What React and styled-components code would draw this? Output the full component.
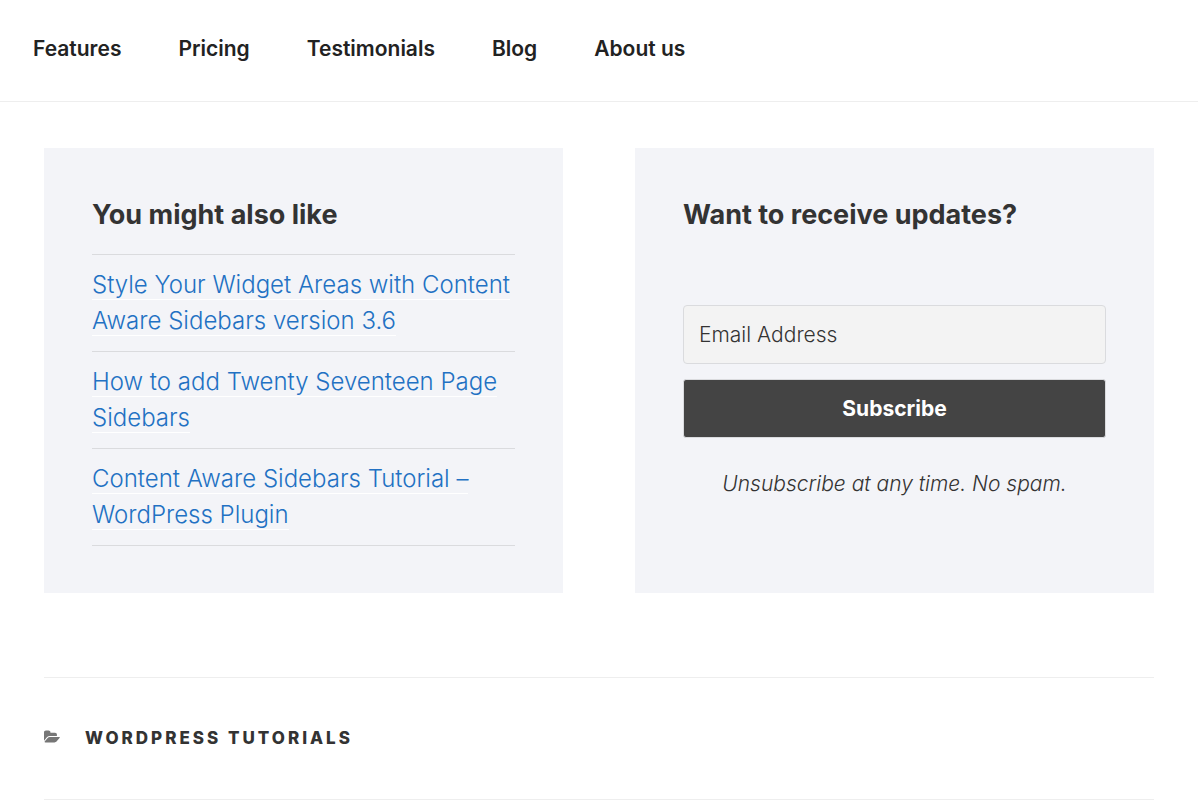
import React from 'react';
import styled, { createGlobalStyle } from 'styled-components';

const COLOR = {
  TEXT: '#333',
  NAV: '#222',
  LINK: '#2271c3',
  PANEL: '#f3f4f8',
  LINE: '#eee',
  PANEL_LINE: '#dadbde',
};

const navItems = ['Features', 'Pricing', 'Testimonials', 'Blog', 'About us'];

const posts = [
  'Style Your Widget Areas with Content Aware Sidebars version 3.6',
  'How to add Twenty Seventeen Page Sidebars',
  'Content Aware Sidebars Tutorial – WordPress Plugin',
];

const GlobalStyle = createGlobalStyle`
  *, *::before, *::after {
    box-sizing: border-box;
  }
  body {
    margin: 0;
    background: #fff;
    color: ${COLOR.TEXT};
    font-family: Inter, "Liberation Sans", sans-serif;
    font-weight: 350;
  }
`;

const Header = styled.header`
  padding: 33px 33px 36px;
  border-bottom: 1px solid ${COLOR.LINE};
`;

const Nav = styled.nav`
  display: flex;
  flex-wrap: wrap;
  column-gap: 57px;
`;

const NavLink = styled.a`
  color: ${COLOR.NAV};
  font-size: 21px;
  font-weight: 600;
  line-height: 32px;
  text-decoration: none;
`;

const Content = styled.main`
  padding: 46px 44px 0;
`;

const Panels = styled.div`
  display: grid;
  grid-template-columns: 1fr 1fr;
  gap: 72px;
`;

const Panel = styled.section`
  padding: 48px 48px 47px;
  background: ${COLOR.PANEL};
`;

const PanelTitle = styled.h2`
  margin: 0 0 20px;
  font-size: 27px;
  font-weight: 700;
  line-height: 38px;
`;

const PostList = styled.ul`
  margin: 0;
  padding: 0;
  list-style: none;
  border-top: 1px solid ${COLOR.PANEL_LINE};
`;

const PostItem = styled.li`
  padding: 12px 0;
  border-bottom: 1px solid ${COLOR.PANEL_LINE};
  font-size: 24px;
  line-height: 36px;
`;

const PostLink = styled.a`
  color: ${COLOR.LINK};
  text-decoration: none;
  box-shadow: 0 1px 0 #fff;
`;

const Form = styled.form`
  display: flex;
  flex-direction: column;
  gap: 15px;
  padding-top: 51px;
`;

const EmailInput = styled.input`
  width: 100%;
  height: 59px;
  padding: 0 15px;
  border: 1px solid ${COLOR.PANEL_LINE};
  border-radius: 4px;
  background: #f3f3f3;
  color: ${COLOR.TEXT};
  font: inherit;
  font-size: 21px;

  &::placeholder {
    color: ${COLOR.TEXT};
    opacity: 1;
  }
`;

const SubscribeButton = styled.button`
  height: 59px;
  border: 1px solid ${COLOR.PANEL_LINE};
  border-radius: 3px;
  background: #444;
  color: #fff;
  font: inherit;
  font-size: 21px;
  font-weight: 700;
`;

const Note = styled.p`
  margin: 28px 0 0;
  font-size: 21px;
  font-style: italic;
  line-height: 36px;
  text-align: center;
`;

const Footer = styled.footer`
  display: flex;
  align-items: center;
  gap: 25px;
  margin-top: 84px;
  padding: 48px 0;
  border-top: 1px solid ${COLOR.LINE};
  border-bottom: 1px solid ${COLOR.LINE};
`;

const FolderIcon = styled.svg`
  width: 16px;
  height: 16px;
  margin-bottom: 3px;
  fill: #767676;
`;

const CategoryLink = styled.a`
  color: ${COLOR.TEXT};
  font-size: 17px;
  font-weight: 800;
  letter-spacing: 3px;
  line-height: 25px;
  text-decoration: none;
  text-transform: uppercase;
`;

const RelatedPosts = () => (
  <Panel>
    <PanelTitle>You might also like</PanelTitle>
    <PostList>
      {posts.map((title) => (
        <PostItem key={title}>
          <PostLink href="#post">{title}</PostLink>
        </PostItem>
      ))}
    </PostList>
  </Panel>
);

const Newsletter = () => (
  <Panel>
    <PanelTitle>Want to receive updates?</PanelTitle>
    <Form onSubmit={(e) => e.preventDefault()}>
      <EmailInput type="email" placeholder="Email Address" aria-label="Email Address" />
      <SubscribeButton type="submit">Subscribe</SubscribeButton>
    </Form>
    <Note>Unsubscribe at any time. No spam.</Note>
  </Panel>
);

const App = () => (
  <>
    <GlobalStyle />
    <Header>
      <Nav>
        {navItems.map((item) => (
          <NavLink key={item} href="#nav">{item}</NavLink>
        ))}
      </Nav>
    </Header>
    <Content>
      <Panels>
        <RelatedPosts />
        <Newsletter />
      </Panels>
      <Footer>
        <FolderIcon viewBox="0 0 34 32" aria-hidden="true">
          <path d="M33.554 17q0 0.554-0.554 1.179l-6 7.071q-0.768 0.911-2.152 1.545t-2.563 0.634h-19.429q-0.607 0-1.080-0.232t-0.473-0.768q0-0.554 0.554-1.179l6-7.071q0.768-0.911 2.152-1.545t2.563-0.634h19.429q0.607 0 1.080 0.232t0.473 0.768zM27.429 10.857v2.857h-14.857q-1.679 0-3.518 0.848t-2.929 2.134l-6.107 7.179q0-0.071-0.009-0.223t-0.009-0.223v-17.143q0-1.643 1.179-2.821t2.821-1.179h5.714q1.643 0 2.821 1.179t1.179 2.821v0.571h9.714q1.643 0 2.821 1.179t1.179 2.821z" />
        </FolderIcon>
        <CategoryLink href="#category">WordPress Tutorials</CategoryLink>
      </Footer>
    </Content>
  </>
);

export default App;
